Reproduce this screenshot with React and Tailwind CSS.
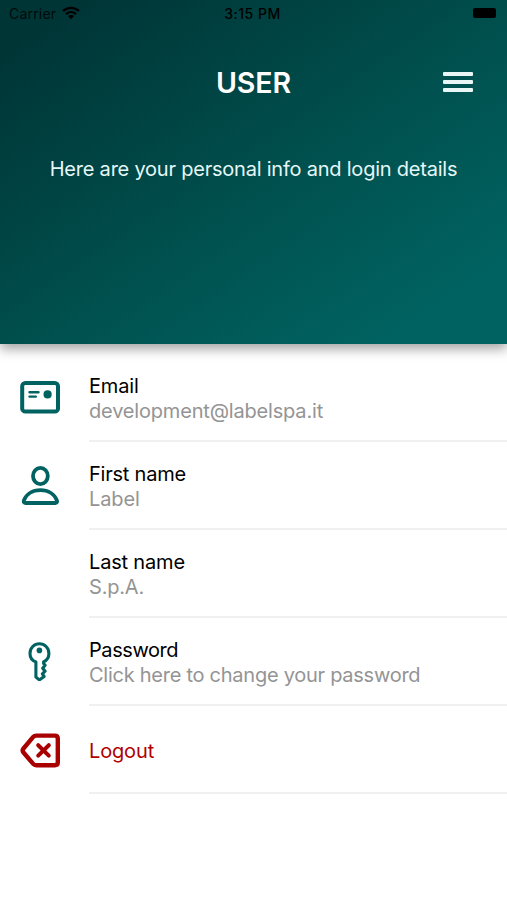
const TEAL = "#006361";

function CardIcon() {
  return (
    <svg width="40" height="40" viewBox="0 0 40 40" fill="none" stroke={TEAL} strokeLinecap="round">
      <rect x="2.2" y="6" width="35.8" height="28.6" rx="3.2" strokeWidth="4" />
      <path d="M9.5 15.3h9M9.5 19.6h6.3" strokeWidth="2.4" />
      <circle cx="27.6" cy="17.4" r="4.1" fill={TEAL} stroke="none" />
    </svg>
  );
}

function UserIcon() {
  return (
    <svg width="40" height="40" viewBox="0 0 40 40" fill="none" stroke={TEAL} strokeWidth="3.8" strokeLinejoin="round">
      <ellipse cx="20.4" cy="11" rx="7.4" ry="8.2" />
      <path d="M5.3 38H35.5C37 38 37.4 36.9 36.9 35.4C34.7 29.4 28.5 25.2 20.4 25.2S6.1 29.4 3.9 35.4C3.4 36.9 3.8 38 5.3 38Z" />
    </svg>
  );
}

function KeyIcon() {
  return (
    <svg width="40" height="40" viewBox="0 0 40 40" fill="none" stroke={TEAL} strokeWidth="3.1" strokeLinejoin="round">
      <path d="M15.9 20.9C12 19.4 10 16.2 10 12.4C10 6.8 14.2 2.8 19.4 2.8S28.9 6.8 28.9 12.4C28.9 15.9 27 19.2 23.6 20.9V22.4L25.1 24.2L22.7 27.2L25.1 30.2L22.4 32.8L24.1 35.4L19.4 38.9L15.9 36.1Z" />
      <circle cx="19.4" cy="9.4" r="2.8" fill={TEAL} stroke="none" />
    </svg>
  );
}

function LogoutIcon() {
  return (
    <svg width="40" height="40" viewBox="0 0 40 40" fill="none" stroke="#a90000" strokeLinecap="round" strokeLinejoin="round">
      <path d="M16.2 5.6H34.8C36.8 5.6 37.8 6.8 37.8 8.6V32.2C37.8 34 36.8 35.2 34.8 35.2H16.2C15 35.2 14 34.8 13.2 33.9L3.5 22.5C2.4 21.2 2.4 19.8 3.5 18.5L13.2 6.9C14 6 15 5.6 16.2 5.6Z" strokeWidth="4.4" />
      <path d="M18.2 15.2L28.8 25.6M28.8 15.2L18.2 25.6" strokeWidth="4" />
    </svg>
  );
}

function WifiIcon() {
  return (
    <svg width="18" height="14" viewBox="0 0 18 14" fill="none" stroke="#000" strokeWidth="2.3">
      <path d="M1 5C5.6 .7 12.4 .7 17 5M4 8.1C7 5.4 11 5.4 14 8.1" />
      <path d="M5.9 10.1C7.8 8.5 10.2 8.5 12.1 10.1L9 13.3Z" fill="#000" stroke="none" />
    </svg>
  );
}

const rows = [
  { label: "Email", value: "development@labelspa.it", icon: <CardIcon />, ls: "tracking-[-0.15px]", vs: "tracking-[-0.18px]" },
  { label: "First name", value: "Label", icon: <UserIcon />, ls: "tracking-[-0.22px]", vs: "tracking-[-0.1px]" },
  { label: "Last name", value: "S.p.A.", icon: null, ls: "tracking-[-0.18px]", vs: "tracking-[-0.2px]" },
  { label: "Password", value: "Click here to change your password", icon: <KeyIcon />, ls: "tracking-[-0.42px]", vs: "tracking-[-0.26px]" },
];

export default function App() {
  return (
    <div className="h-[900px] w-full overflow-hidden bg-white font-['Inter',sans-serif]">
      <header className="h-[344px] bg-[linear-gradient(146deg,#003536_8%,#00504e_53%,#006361_88%)] shadow-[0_5px_11px_rgba(0,0,0,0.36)]">
        <div className="grid h-[26px] grid-cols-3 items-center pl-[9px] pr-[11px] text-black">
          <div className="flex items-center gap-[6px] text-[14px]">
            <span className="tracking-[0.2px] opacity-80">Carrier</span>
            <WifiIcon />
          </div>
          <span className="text-center text-[14px] font-medium tracking-[0.5px]">3:15 PM</span>
          <div className="h-[10px] w-[23px] justify-self-end rounded-[2px] bg-black" />
        </div>
        <div className="grid h-[112px] grid-cols-3 items-center px-[34px]">
          <span />
          <h1 className="pt-[2px] text-center text-[28.5px] font-semibold tracking-[-0.1px] text-white">USER</h1>
          <div className="flex w-[30px] flex-col gap-1 justify-self-end">
            <span className="h-1 rounded-[1px] bg-[#e9f6f6]" />
            <span className="h-1 rounded-[1px] bg-[#e9f6f6]" />
            <span className="h-1 rounded-[1px] bg-[#e9f6f6]" />
          </div>
        </div>
        <p className="mt-[17px] text-center text-[20px] leading-7 tracking-[-0.22px] whitespace-nowrap text-[#e6f7f7]">
          Here are your personal info and login details
        </p>
      </header>
      <main className="pt-[10px]">
        {rows.map((r) => (
          <div key={r.label} className="flex h-[88px]">
            <div className="w-[89px] pt-[23px] pl-5">{r.icon}</div>
            <div className="flex flex-1 flex-col justify-center border-b-2 border-[#f0f0f0] pt-[3px] text-[20px] leading-[24.5px] whitespace-nowrap">
              <div className={`text-black ${r.ls}`}>{r.label}</div>
              <div className={`text-[#949494] ${r.vs}`}>{r.value}</div>
            </div>
          </div>
        ))}
        <div className="flex h-[88px]">
          <div className="w-[89px] pt-[24px] pl-5"><LogoutIcon /></div>
          <div className="flex flex-1 items-center border-b-2 border-[#f0f0f0] pt-[3px] text-[20px] tracking-[-0.15px] text-[#b00000]">Logout</div>
        </div>
      </main>
    </div>
  );
}
